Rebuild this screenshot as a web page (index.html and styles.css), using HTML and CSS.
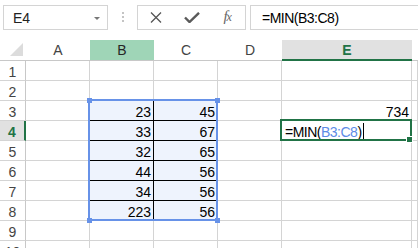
FILE: index.html
```html
<!DOCTYPE html>
<html lang="en">
<head>
<meta charset="UTF-8">
<title>MIN</title>
<link rel="stylesheet" href="styles.css">
</head>
<body>
<div class="formula-bar">
  <div class="name-box"><span>E4</span><span class="drop"></span></div>
  <div class="grip"><span></span><span></span><span></span></div>
  <div class="fb-buttons">
    <div class="fb-btn"><svg width="12" height="11" viewBox="0 0 12 11"><path d="M1 0.5L11 10.5M11 0.5L1 10.5" stroke="#555" stroke-width="1.3" fill="none"/></svg></div>
    <div class="fb-btn"><svg width="16" height="11" viewBox="0 0 16 11"><path d="M1 5.5L5.5 10L15 0.8" stroke="#5a5a5a" stroke-width="2.4" fill="none"/></svg></div>
    <div class="fb-btn"><i class="fx">f<small>x</small></i></div>
  </div>
  <div class="fb-input"><span class="formula">=MIN(B3:C8)</span></div>
</div>

<div class="sheet">
  <div class="corner"><svg width="13" height="13" viewBox="0 0 13 13"><polygon points="13,0 13,13 0,13" fill="#dcdcdc"/></svg></div>
  <div class="col">A</div>
  <div class="col ref">B</div>
  <div class="col">C</div>
  <div class="col">D</div>
  <div class="col on">E</div>
  <div class="col"></div>

  <div class="rh">1</div><div></div><div></div><div></div><div></div><div></div><div></div>
  <div class="rh">2</div><div></div><div></div><div></div><div></div><div></div><div></div>
  <div class="rh">3</div><div></div><div class="sel">23</div><div class="sel">45</div><div></div><div>734</div><div></div>
  <div class="rh on">4</div><div></div><div class="sel">33</div><div class="sel">67</div><div></div>
  <div class="edit"><span class="formula">=MIN(<span class="ref-text">B3:C8</span>)</span><span class="caret"></span><span class="fill-handle"></span></div><div></div>
  <div class="rh">5</div><div></div><div class="sel">32</div><div class="sel">65</div><div></div><div></div><div></div>
  <div class="rh">6</div><div></div><div class="sel">44</div><div class="sel">56</div><div></div><div></div><div></div>
  <div class="rh">7</div><div></div><div class="sel">34</div><div class="sel">56</div><div></div><div></div><div></div>
  <div class="rh">8</div><div></div><div class="sel">223</div><div class="sel">56</div><div></div><div></div><div></div>
  <div class="rh">9</div><div></div><div></div><div></div><div></div><div></div><div></div>
  <div class="rh">10</div><div></div><div></div><div></div><div></div><div></div><div></div>

  <div class="range">
    <span class="h tl"></span><span class="h tr"></span><span class="h bl"></span><span class="h br"></span>
  </div>
</div>
</body>
</html>
```

FILE: styles.css
```css
body { margin: 0; font-family: "Liberation Sans", Arial, sans-serif; font-size: 14px; color: #000; background: #fff; overflow: hidden; }

.formula-bar { display: flex; align-items: flex-start; height: 40px; padding-top: 5px; box-sizing: border-box; }
.name-box { margin-left: 3px; width: 105px; height: 25px; box-sizing: border-box; border: 1px solid #d4d4d4; display: flex; align-items: center; justify-content: space-between; padding: 0 7px 0 9px; color: #222; }
.drop { width: 0; height: 0; border-left: 3px solid transparent; border-right: 3px solid transparent; border-top: 3px solid #777; margin-top: 1px; }
.grip { width: 29px; height: 25px; display: flex; flex-direction: column; align-items: center; gap: 2px; padding-top: 7px; box-sizing: border-box; }
.grip span { width: 2px; height: 2px; background: #c4c4c4; }
.fb-buttons { width: 109px; height: 25px; box-sizing: border-box; border: 1px solid #d4d4d4; display: flex; padding-left: 0; }
.fb-btn { width: 36px; display: flex; align-items: center; justify-content: center; }
.fx { font-family: "Liberation Serif", serif; font-size: 15px; color: #666; margin-top: -3px; letter-spacing: -1px; }
.fx small { font-size: 12px; }
.fb-input { flex: 1; margin: 0 -2px 0 4px; height: 25px; box-sizing: border-box; border: 1px solid #d4d4d4; display: flex; align-items: center; padding-left: 11px; }
.formula { letter-spacing: -0.5px; }

.sheet { position: relative; display: grid; grid-template-columns: 26px 64px 64px 64px 64px 130px 1fr; grid-template-rows: 21px; grid-auto-rows: 20px; }
.sheet > div { box-sizing: border-box; border-right: 1px solid #d4d4d4; border-bottom: 1px solid #d4d4d4; display: flex; align-items: flex-end; justify-content: flex-end; padding: 0 2px 0 2px; line-height: 16px; white-space: nowrap; }

.sheet > .corner { border-right: none; border-bottom-color: #c8c8c8; padding: 0 3px 4px 0; }
.sheet > .col { border-right: none; border-bottom-color: #c8c8c8; justify-content: center; align-items: center; color: #444; padding: 0; }
.sheet > .col.ref { background: #9fd5b7; color: #262626; }
.sheet > .col.on { background: #e1e1e1; color: #217346; font-weight: bold; border-bottom: 2px solid #217346; }
.sheet > .rh { justify-content: center; color: #444; border-right-color: #c8c8c8; padding: 0; }
.sheet > .rh.on { background: #e1e1e1; color: #217346; font-weight: bold; border-right: 2px solid #217346; }

.sheet > .sel { background: #eef3fd; border-right-color: #000; border-bottom-color: #000; }

.sheet > .edit { position: relative; justify-content: flex-start; padding-left: 3px; }
.edit::after { content: ""; position: absolute; left: -2px; top: -2px; right: -1px; bottom: -1px; border: 2px solid #217346; }
.ref-text { color: #5d8be6; }
.caret { width: 1px; height: 17px; background: #000; margin-left: 1px; }
.fill-handle { position: absolute; right: -2px; bottom: -3px; width: 5px; height: 5px; background: #217346; border: 1px solid #fff; z-index: 1; }

.sheet > .range { position: absolute; grid-column: 3 / 5; grid-row: 4 / 10; top: -2px; left: -2px; right: 0; bottom: 0; border: 2px solid #6792e8; padding: 0; display: block; }
.h { position: absolute; width: 5px; height: 5px; background: #6792e8; }
.tl { left: -3px; top: -3px; }
.tr { right: -4px; top: -3px; }
.bl { left: -3px; bottom: -4px; }
.br { right: -4px; bottom: -4px; }
```
